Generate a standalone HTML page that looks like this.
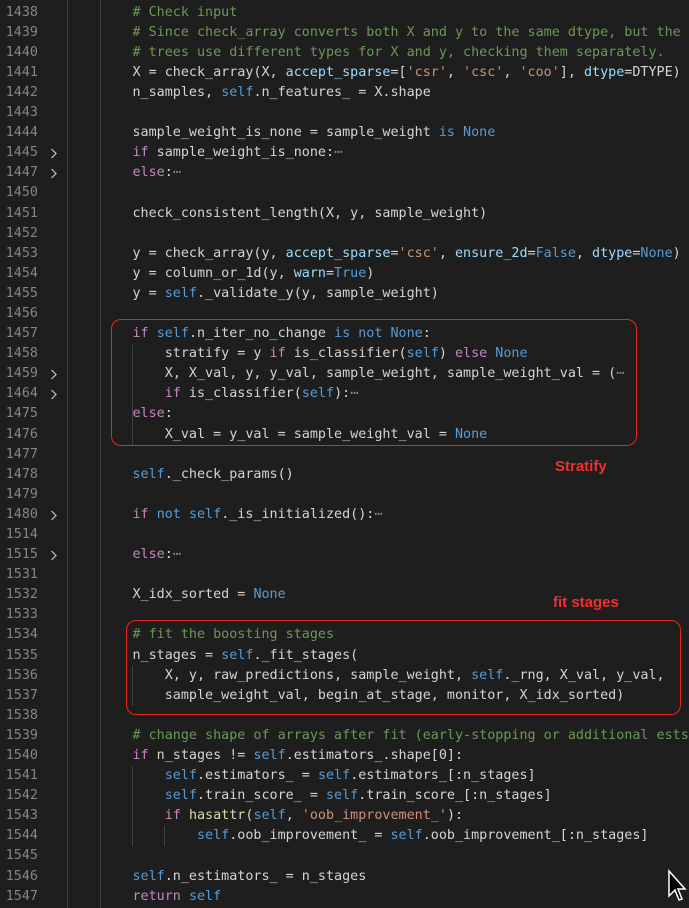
<!DOCTYPE html>
<html><head><meta charset="utf-8"><style>
html,body{margin:0;padding:0;background:#1e1e1e;width:689px;height:908px;overflow:hidden}
.w{position:relative;width:689px;height:908px}
.t{position:absolute;left:0;top:2px;width:689px;height:908px}
.r{position:absolute;left:0;height:20px;width:689px;font-family:"DejaVu Sans Mono","Liberation Mono",monospace;font-size:13.4px;line-height:20px;white-space:pre;color:#d4d4d4}
.n{position:absolute;left:0;width:38px;text-align:right;color:#858585}
.c{position:absolute;left:68px}
.cm{color:#6a9955}.k{color:#c586c0}.s{color:#569cd6}.st{color:#ce9178}.p{color:#9cdcfe}.f{color:#dcdcaa}.e{color:#8a8a8a}
.g{position:absolute;width:1px;background:#404040}
.box{position:absolute;border:1.5px solid #e8261e;border-radius:10px}
.lab{position:absolute;font-family:"Liberation Sans",sans-serif;font-weight:bold;font-size:15px;color:#f0302a}
.ch{position:absolute;left:50px}
</style></head><body><div class="w">
<div class="g" style="left:67px;top:0;height:908px"></div>
<div class="g" style="left:100px;top:0;height:908px"></div>
<div class="g" style="left:132px;top:345px;height:80px"></div>
<div class="g" style="left:132px;top:425px;height:20px"></div>
<div class="g" style="left:132px;top:666px;height:40px"></div>
<div class="g" style="left:132px;top:766px;height:80px"></div>
<div class="g" style="left:164px;top:826px;height:20px"></div>
<div class="t">
<div class="r" style="top:1px"><span class="n">1438</span><span class="c">        <span class="cm"># Check input</span></span></div>
<div class="r" style="top:21px"><span class="n">1439</span><span class="c">        <span class="cm"># Since check_array converts both X and y to the same dtype, but the</span></span></div>
<div class="r" style="top:41px"><span class="n">1440</span><span class="c">        <span class="cm"># trees use different types for X and y, checking them separately.</span></span></div>
<div class="r" style="top:61px"><span class="n">1441</span><span class="c">        X = check_array(X, <span class="p">accept_sparse</span>=[<span class="st">'csr'</span>, <span class="st">'csc'</span>, <span class="st">'coo'</span>], <span class="p">dtype</span>=DTYPE)</span></div>
<div class="r" style="top:81px"><span class="n">1442</span><span class="c">        n_samples, <span class="s">self</span>.n_features_ = X.shape</span></div>
<div class="r" style="top:101px"><span class="n">1443</span></div>
<div class="r" style="top:121px"><span class="n">1444</span><span class="c">        sample_weight_is_none = sample_weight <span class="s">is</span> <span class="s">None</span></span></div>
<div class="r" style="top:141px"><span class="n">1445</span><svg class="ch" style="top:5px" width="8" height="11"><path d="M1.5 1 L6 5.5 L1.5 10" fill="none" stroke="#c5c5c5" stroke-width="1.2"/></svg><span class="c">        <span class="k">if</span> sample_weight_is_none:<span class="e">⋯</span></span></div>
<div class="r" style="top:161px"><span class="n">1447</span><svg class="ch" style="top:5px" width="8" height="11"><path d="M1.5 1 L6 5.5 L1.5 10" fill="none" stroke="#c5c5c5" stroke-width="1.2"/></svg><span class="c">        <span class="k">else</span>:<span class="e">⋯</span></span></div>
<div class="r" style="top:181px"><span class="n">1450</span></div>
<div class="r" style="top:202px"><span class="n">1451</span><span class="c">        check_consistent_length(X, y, sample_weight)</span></div>
<div class="r" style="top:222px"><span class="n">1452</span></div>
<div class="r" style="top:242px"><span class="n">1453</span><span class="c">        y = check_array(y, <span class="p">accept_sparse</span>=<span class="st">'csc'</span>, <span class="p">ensure_2d</span>=<span class="s">False</span>, <span class="p">dtype</span>=<span class="s">None</span>)</span></div>
<div class="r" style="top:262px"><span class="n">1454</span><span class="c">        y = column_or_1d(y, <span class="p">warn</span>=<span class="s">True</span>)</span></div>
<div class="r" style="top:282px"><span class="n">1455</span><span class="c">        y = <span class="s">self</span>._validate_y(y, sample_weight)</span></div>
<div class="r" style="top:302px"><span class="n">1456</span></div>
<div class="r" style="top:322px"><span class="n">1457</span><span class="c">        <span class="k">if</span> <span class="s">self</span>.n_iter_no_change <span class="s">is</span> <span class="s">not</span> <span class="s">None</span>:</span></div>
<div class="r" style="top:342px"><span class="n">1458</span><span class="c">            stratify = y <span class="k">if</span> is_classifier(<span class="s">self</span>) <span class="k">else</span> <span class="s">None</span></span></div>
<div class="r" style="top:362px"><span class="n">1459</span><svg class="ch" style="top:5px" width="8" height="11"><path d="M1.5 1 L6 5.5 L1.5 10" fill="none" stroke="#c5c5c5" stroke-width="1.2"/></svg><span class="c">            X, X_val, y, y_val, sample_weight, sample_weight_val = (<span class="e">⋯</span></span></div>
<div class="r" style="top:382px"><span class="n">1464</span><svg class="ch" style="top:5px" width="8" height="11"><path d="M1.5 1 L6 5.5 L1.5 10" fill="none" stroke="#c5c5c5" stroke-width="1.2"/></svg><span class="c">            <span class="k">if</span> is_classifier(<span class="s">self</span>):<span class="e">⋯</span></span></div>
<div class="r" style="top:402px"><span class="n">1475</span><span class="c">        <span class="k">else</span>:</span></div>
<div class="r" style="top:423px"><span class="n">1476</span><span class="c">            X_val = y_val = sample_weight_val = <span class="s">None</span></span></div>
<div class="r" style="top:443px"><span class="n">1477</span></div>
<div class="r" style="top:463px"><span class="n">1478</span><span class="c">        <span class="s">self</span>._check_params()</span></div>
<div class="r" style="top:483px"><span class="n">1479</span></div>
<div class="r" style="top:503px"><span class="n">1480</span><svg class="ch" style="top:5px" width="8" height="11"><path d="M1.5 1 L6 5.5 L1.5 10" fill="none" stroke="#c5c5c5" stroke-width="1.2"/></svg><span class="c">        <span class="k">if</span> <span class="s">not</span> <span class="s">self</span>._is_initialized():<span class="e">⋯</span></span></div>
<div class="r" style="top:523px"><span class="n">1514</span></div>
<div class="r" style="top:543px"><span class="n">1515</span><svg class="ch" style="top:5px" width="8" height="11"><path d="M1.5 1 L6 5.5 L1.5 10" fill="none" stroke="#c5c5c5" stroke-width="1.2"/></svg><span class="c">        <span class="k">else</span>:<span class="e">⋯</span></span></div>
<div class="r" style="top:563px"><span class="n">1531</span></div>
<div class="r" style="top:583px"><span class="n">1532</span><span class="c">        X_idx_sorted = <span class="s">None</span></span></div>
<div class="r" style="top:603px"><span class="n">1533</span></div>
<div class="r" style="top:623px"><span class="n">1534</span><span class="c">        <span class="cm"># fit the boosting stages</span></span></div>
<div class="r" style="top:644px"><span class="n">1535</span><span class="c">        n_stages = <span class="s">self</span>._fit_stages(</span></div>
<div class="r" style="top:664px"><span class="n">1536</span><span class="c">            X, y, raw_predictions, sample_weight, <span class="s">self</span>._rng, X_val, y_val,</span></div>
<div class="r" style="top:684px"><span class="n">1537</span><span class="c">            sample_weight_val, begin_at_stage, monitor, X_idx_sorted)</span></div>
<div class="r" style="top:704px"><span class="n">1538</span></div>
<div class="r" style="top:724px"><span class="n">1539</span><span class="c">        <span class="cm"># change shape of arrays after fit (early-stopping or additional ests</span></span></div>
<div class="r" style="top:744px"><span class="n">1540</span><span class="c">        <span class="k">if</span> n_stages != <span class="s">self</span>.estimators_.shape[0]:</span></div>
<div class="r" style="top:764px"><span class="n">1541</span><span class="c">            <span class="s">self</span>.estimators_ = <span class="s">self</span>.estimators_[:n_stages]</span></div>
<div class="r" style="top:784px"><span class="n">1542</span><span class="c">            <span class="s">self</span>.train_score_ = <span class="s">self</span>.train_score_[:n_stages]</span></div>
<div class="r" style="top:804px"><span class="n">1543</span><span class="c">            <span class="k">if</span> <span class="f">hasattr</span>(<span class="s">self</span>, <span class="st">'oob_improvement_'</span>):</span></div>
<div class="r" style="top:824px"><span class="n">1544</span><span class="c">                <span class="s">self</span>.oob_improvement_ = <span class="s">self</span>.oob_improvement_[:n_stages]</span></div>
<div class="r" style="top:844px"><span class="n">1545</span></div>
<div class="r" style="top:865px"><span class="n">1546</span><span class="c">        <span class="s">self</span>.n_estimators_ = n_stages</span></div>
<div class="r" style="top:885px"><span class="n">1547</span><span class="c">        <span class="k">return</span> <span class="s">self</span></span></div>
</div>
<div class="box" style="left:111px;top:319px;width:524px;height:125px"></div>
<div class="box" style="left:126px;top:620px;width:553px;height:93px"></div>
<div class="lab" style="left:555px;top:458px">Stratify</div>
<div class="lab" style="left:553px;top:594px">fit stages</div>
<svg style="position:absolute;left:667px;top:869px" width="20" height="34"><path d="M2 2 L2 27 L8 21 L12 31 L15 30 L11 20 L18 20 Z" fill="#000" stroke="#fff" stroke-width="1.5"/></svg>
</div></body></html>
